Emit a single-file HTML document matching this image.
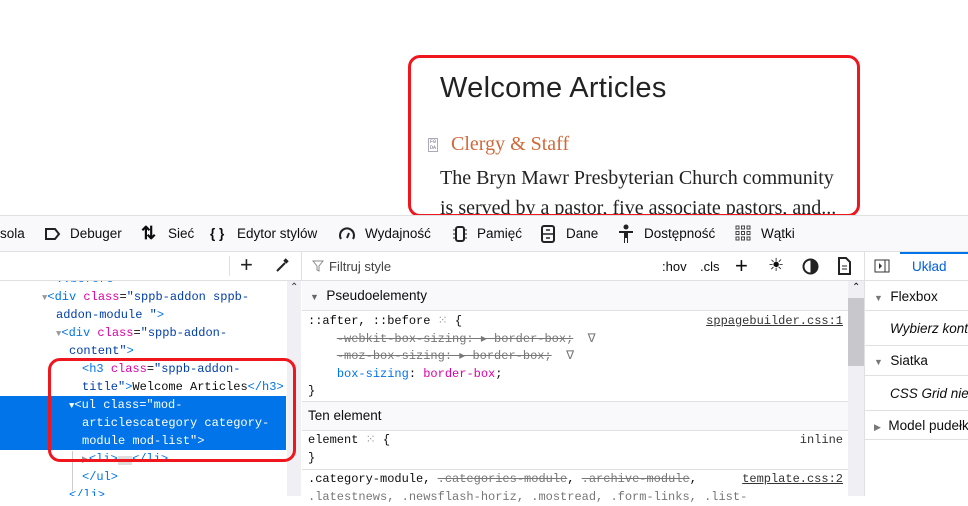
<!DOCTYPE html>
<html><head><meta charset="utf-8"><style>
*{margin:0;padding:0;box-sizing:border-box}
body{width:968px;height:496px;overflow:hidden;background:#fff;font-family:"Liberation Sans",sans-serif;position:relative;color:#0c0c0d}
.abs{position:absolute}
.mono{font-family:"Liberation Mono",monospace;font-size:12px}
.mono div{white-space:pre;height:18px}
.tag{color:#0074e8}.attr{color:#dd00a9}.val{color:#003eaa}
.tb{top:215px;left:0;width:968px;height:37px;background:#f9f9fb;border-top:1px solid #e0e0e2;border-bottom:1px solid #e0e0e2;font-size:13.5px}
.tb span{position:absolute;top:10px}
</style></head><body>
<div class="abs" style="left:440px;top:72px;font-size:29px;color:#222;letter-spacing:0.3px">Welcome Articles</div>
<div class="abs" style="left:428px;top:138px;width:10px;height:14px;border:1px solid #aab;font-size:5px;line-height:6px;color:#667;font-family:'Liberation Mono',monospace;text-align:center">F0<br>DA</div>
<div class="abs" style="left:451px;top:133px;font-family:'Liberation Serif',serif;font-size:20px;color:#d0693a">Clergy &amp; Staff</div>
<div class="abs" style="left:440px;top:163px;font-family:'Liberation Serif',serif;font-size:20px;color:#222;line-height:30px;white-space:nowrap">The Bryn Mawr Presbyterian Church community<br>is served by a pastor, five associate pastors, and...</div>
<div class="abs" style="left:408px;top:55px;width:452px;height:162px;border:3px solid #f0161e;border-radius:12px"></div>
<div class="abs tb">
<span style="left:0">sola</span>
<svg class="abs" style="left:44px;top:11px" width="17" height="14"><path d="M2 2h9l4 5-4 5H2z" fill="none" stroke="#222" stroke-width="2"/></svg>
<span style="left:70px">Debuger</span>
<span style="left:141px;top:7px;font-size:18px;font-weight:bold">⇅</span>
<span style="left:168px">Sieć</span>
<span style="left:210px;font-weight:bold">{ }</span>
<span style="left:237px">Edytor stylów</span>
<svg class="abs" style="left:338px;top:10px" width="18" height="16"><path d="M3 13A7 7 0 1 1 15 13" fill="none" stroke="#222" stroke-width="2"/><path d="M9 12l2-5" stroke="#222" stroke-width="2"/></svg>
<span style="left:365px">Wydajność</span>
<svg class="abs" style="left:451px;top:9px" width="18" height="18"><rect x="5" y="2" width="8" height="14" rx="2" fill="none" stroke="#222" stroke-width="2"/><path d="M2 5h3M2 9h3M2 13h3M13 5h3M13 9h3M13 13h3" stroke="#222"/></svg>
<span style="left:477px">Pamięć</span>
<svg class="abs" style="left:540px;top:9px" width="16" height="18"><rect x="2" y="1" width="12" height="16" rx="2" fill="none" stroke="#222" stroke-width="2"/><path d="M2 9h12M6 5h4M6 13h4" stroke="#222" stroke-width="1.5"/></svg>
<span style="left:566px">Dane</span>
<svg class="abs" style="left:618px;top:8px" width="16" height="20"><circle cx="8" cy="3" r="2.5" fill="#222"/><path d="M1 7h14v2H10v10H9v-5H7v5H6V9H1z" fill="#222"/></svg>
<span style="left:644px">Dostępność</span>
<svg class="abs" style="left:735px;top:9px" width="16" height="16" fill="none" stroke="#444"><rect x="1" y="1" width="3" height="3"/><rect x="6.5" y="1" width="3" height="3"/><rect x="12" y="1" width="3" height="3"/><rect x="1" y="6.5" width="3" height="3"/><rect x="6.5" y="6.5" width="3" height="3"/><rect x="12" y="6.5" width="3" height="3"/><rect x="1" y="12" width="3" height="3"/><rect x="6.5" y="12" width="3" height="3"/><rect x="12" y="12" width="3" height="3"/></svg>
<span style="left:761px">Wątki</span>
</div>
<div class="abs" style="left:0;top:252px;width:302px;height:29px;border-bottom:1px solid #e0e0e2;border-right:1px solid #e0e0e2;background:#fff"></div>
<div class="abs" style="left:229px;top:256px;width:1px;height:20px;background:#e0e0e2"></div>
<div class="abs" style="left:240px;top:252px;font-size:22px;color:#222">+</div>
<svg class="abs" style="left:274px;top:257px" width="16" height="16"><path d="M3 14l8-8M10 3l3 3M11 2l3 3" stroke="#222" stroke-width="2"/></svg>
<div class="abs" style="left:0;top:396px;width:286px;height:54px;background:#0074e8"></div>
<div class="abs" style="left:0;top:281px;width:286px;height:215px;overflow:hidden">
<div class="abs mono" style="left:0;top:-11px;width:286px;line-height:18px"><div style="padding-left:56px" class="tag">::before</div><div style="padding-left:42px"><span style="color:#999;font-size:9px">▼</span><span class="tag">&lt;div </span><span class="attr">class</span>=<span class="val">"sppb-addon sppb-</span></div><div style="padding-left:56px"><span class="val">addon-module "</span><span class="tag">&gt;</span></div><div style="padding-left:56px"><span style="color:#999;font-size:9px">▼</span><span class="tag">&lt;div </span><span class="attr">class</span>=<span class="val">"sppb-addon-</span></div><div style="padding-left:69px"><span class="val">content"</span><span class="tag">&gt;</span></div><div style="padding-left:82px"><span class="tag">&lt;h3 </span><span class="attr">class</span>=<span class="val">"sppb-addon-</span></div><div style="padding-left:82px"><span class="val">title"</span><span class="tag">&gt;</span>Welcome Articles<span class="tag">&lt;/h3&gt;</span></div><div style="padding-left:69px;color:#fff"><span style="font-size:9px">▼</span>&lt;ul class="mod-</div><div style="padding-left:82px;color:#fff">articlescategory category-</div><div style="padding-left:82px;color:#fff">module mod-list"&gt;</div><div style="padding-left:82px"><span style="color:#999;font-size:9px">▶</span><span class="tag">&lt;li&gt;</span><span style="background:#ddd;font-size:8px">···</span><span class="tag">&lt;/li&gt;</span></div><div style="padding-left:82px"><span class="tag">&lt;/ul&gt;</span></div><div style="padding-left:69px"><span class="tag">&lt;/li&gt;</span></div></div>
</div>
<div class="abs" style="left:72px;top:451px;width:1px;height:40px;background:#ccc"></div>
<div class="abs" style="left:287px;top:281px;width:14px;height:215px;background:#f0f0f4"></div>
<div class="abs" style="left:290px;top:282px;font-size:10px;color:#333">⌃</div>
<div class="abs" style="left:48px;top:358px;width:248px;height:104px;border:3px solid #f0161e;border-radius:12px"></div>
<div class="abs" style="left:302px;top:252px;width:562px;height:29px;border-bottom:1px solid #e0e0e2;font-size:13px">
<svg class="abs" style="left:10px;top:8px" width="12" height="12"><path d="M1 1h10L7 6v5L5 10V6z" fill="none" stroke="#888"/></svg>
<span class="abs" style="left:27px;top:7px;color:#444">Filtruj style</span>
<span class="abs" style="left:360px;top:7px">:hov</span><span class="abs" style="left:398px;top:7px">.cls</span>
<span class="abs" style="left:433px;top:1px;font-size:22px">+</span>
<span class="abs" style="left:466px;top:3px;font-size:18px">☀</span>
<svg class="abs" style="left:500px;top:6px" width="17" height="17"><circle cx="8.5" cy="8.5" r="7" fill="none" stroke="#222" stroke-width="2"/><path d="M8.5 1.5A7 7 0 0 1 8.5 15.5z" fill="#222"/></svg>
<svg class="abs" style="left:535px;top:5px" width="14" height="18"><path d="M2 1h7l4 4v12H2z" fill="none" stroke="#222" stroke-width="2"/><path d="M5 9h5M5 12h5" stroke="#222"/></svg>
</div>
<div class="abs" style="left:848px;top:281px;width:16px;height:215px;background:#f0f0f4"></div>
<div class="abs" style="left:848px;top:298px;width:16px;height:68px;background:#c8c8cc"></div>
<div class="abs" style="left:852px;top:282px;font-size:10px">⌃</div>
<div class="abs" style="left:302px;top:281px;width:546px;height:30px;background:#f9f9fb;border-bottom:1px solid #e0e0e2;font-size:13.5px;padding:7px 0 0 8px"><span style="color:#666;font-size:9px">▼</span>&nbsp; Pseudoelementy</div>
<div class="abs mono" style="left:308px;top:313px;width:535px;line-height:17.5px"><div style="height:17.5px">::after, ::before <span style="color:#999">⁙</span> {<span style="float:right;text-decoration:underline;color:#333">sppagebuilder.css:1</span></div><div style="color:#777;height:17.5px">    <s>-webkit-box-sizing: ▸ border-box;</s>  ∇</div><div style="color:#777;height:17.5px">    <s>-moz-box-sizing: ▸ border-box;</s>  ∇</div><div style="height:17.5px">    <span class="tag">box-sizing</span>: <span class="attr">border-box</span>;</div><div style="height:17.5px">}</div></div>
<div class="abs" style="left:302px;top:401px;width:546px;height:30px;background:#f9f9fb;border-top:1px solid #e0e0e2;border-bottom:1px solid #e0e0e2;font-size:13.5px;padding:6px 0 0 6px">Ten element</div>
<div class="abs mono" style="left:308px;top:432px;width:535px;line-height:17.5px"><div style="height:17.5px">element <span style="color:#999">⁙</span> {<span style="float:right;color:#333">inline</span></div><div style="height:17.5px">}</div></div>
<div class="abs" style="left:302px;top:469px;width:546px;height:1px;background:#e0e0e2"></div>
<div class="abs mono" style="left:308px;top:471px;width:535px;line-height:17.5px"><div style="height:17.5px">.category-module, <s style="color:#777">.categories-module</s>, <s style="color:#777">.archive-module</s>,<span style="float:right;text-decoration:underline;color:#333">template.css:2</span></div><div style="color:#777;height:17.5px">.latestnews, .newsflash-horiz, .mostread, .form-links, .list-</div></div>
<div class="abs" style="left:864px;top:252px;width:104px;height:244px;border-left:1px solid #e0e0e2;font-size:13.5px">
<div class="abs" style="left:0;top:0;width:104px;height:29px;border-bottom:1px solid #e0e0e2"></div>
<svg class="abs" style="left:9px;top:7px" width="16" height="14"><rect x="1" y="1" width="14" height="12" fill="none" stroke="#333"/><path d="M11 1v12" stroke="#333"/><path d="M5 4l3 3-3 3z" fill="#333"/></svg>
<div class="abs" style="left:35px;top:0;width:70px;height:2px;background:#0074e8"></div>
<span class="abs" style="left:47px;top:7px;color:#0061e0">Układ</span>
<div class="abs" style="left:0;top:29px;width:104px;height:30px;border-bottom:1px solid #e0e0e2;padding:8px 0 0 9px"><span style="color:#777;font-size:9px">▼</span>&nbsp; Flexbox</div>
<div class="abs" style="left:25px;top:69px;font-style:italic;white-space:nowrap">Wybierz kontener</div>
<div class="abs" style="left:0;top:93px;width:104px;height:1px;background:#e0e0e2"></div>
<div class="abs" style="left:0;top:94px;width:104px;height:30px;border-bottom:1px solid #e0e0e2;padding:7px 0 0 9px"><span style="color:#777;font-size:9px">▼</span>&nbsp; Siatka</div>
<div class="abs" style="left:25px;top:134px;font-style:italic;white-space:nowrap">CSS Grid nie jest</div>
<div class="abs" style="left:0;top:158px;width:104px;height:30px;border-top:1px solid #e0e0e2;border-bottom:1px solid #e0e0e2;padding:7px 0 0 9px;white-space:nowrap"><span style="color:#777;font-size:9px">▶</span>&nbsp; Model pudełkowy</div>
</div>
</body></html>
